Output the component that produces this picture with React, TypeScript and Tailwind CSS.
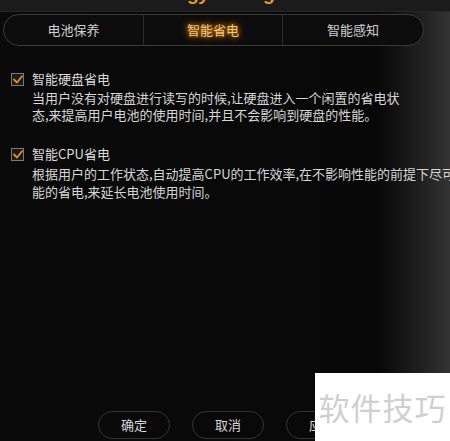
import React from "react";

function Check() {
  return (
    <div className="w-[13px] h-[13px] border border-[#7a7a7a] bg-[#1a1a1a] flex items-center justify-center shrink-0">
      <svg width="10" height="9" viewBox="0 0 10 9">
        <path d="M1 4.5 L4 7.5 L9 1.2" stroke="#e8892a" strokeWidth="1.8" fill="none" strokeLinecap="round" strokeLinejoin="round" />
      </svg>
    </div>
  );
}

export default function App() {
  const font = { fontFamily: '"Microsoft YaHei","Noto Sans CJK SC","Noto Sans",sans-serif' };
  return (
    <div
      className="relative w-[450px] h-[441px] overflow-hidden bg-[linear-gradient(to_right,#0a0a0a_0%,#080808_84%,#1e1e1e_93%,#333333_100%)] text-[#d6d6d6] text-[13px]"
      style={font}
    >
      {/* title strip */}
      <div className="h-[12px] bg-[#1b1b1b] overflow-hidden relative border-b border-[#262626]">
        <div className="absolute left-[146px] top-[-20px] text-[19px] font-bold italic text-[#e49a2c] whitespace-nowrap" style={{ fontFamily: '"Liberation Sans",sans-serif' }}>
          Energy Management
        </div>
      </div>
      {/* tab bar */}
      <div className="pt-[2px] pl-[3px]">
        <div className="w-[421px] h-[32px] rounded-full border border-[#3a3a3a] bg-[#0c0c0c] flex">
          <div className="w-[139px] flex items-center justify-center text-[#d0d0d0]">电池保养</div>
          <div className="w-[140px] flex items-center justify-center border-l border-r border-[#2c2c2c] text-[#f6c57e] [text-shadow:0_0_5px_#d9860f,0_0_9px_#b86a08]">
            智能省电
          </div>
          <div className="flex-1 flex items-center justify-center text-[#d0d0d0]">智能感知</div>
        </div>
      </div>

      {/* section 1 */}
      <div className="pl-[11px] pt-[24px]">
        <div className="flex items-center gap-[8px] h-[18px]">
          <Check />
          <span className="text-[#dcdcdc]">智能硬盘省电</span>
        </div>
        <div className="pl-[21px] pt-[1px] leading-[17px] whitespace-nowrap">
          <div>当用户没有对硬盘进行读写的时候,让硬盘进入一个闲置的省电状</div>
          <div>态,来提高用户电池的使用时间,并且不会影响到硬盘的性能。</div>
        </div>
      </div>

      {/* section 2 */}
      <div className="pl-[11px] pt-[22px]">
        <div className="flex items-center gap-[8px] h-[18px]">
          <Check />
          <span className="text-[#dcdcdc]">智能CPU省电</span>
        </div>
        <div className="pl-[21px] pt-[2px] leading-[18px] whitespace-nowrap">
          <div>根据用户的工作状态,自动提高CPU的工作效率,在不影响性能的前提下尽可</div>
          <div>能的省电,来延长电池使用时间。</div>
        </div>
      </div>

      {/* buttons */}
      <div className="absolute left-[98px] top-[411px] flex gap-[22px]">
        <div className="w-[72px] h-[28px] rounded-full border border-[#343434] flex items-center justify-center text-[#d8d8d8]">确定</div>
        <div className="w-[72px] h-[28px] rounded-full border border-[#343434] flex items-center justify-center text-[#d8d8d8]">取消</div>
        <div className="w-[72px] h-[28px] rounded-full border border-[#343434] flex items-center justify-center text-[#d8d8d8]">应用</div>
      </div>

      {/* watermark */}
      <div className="absolute left-[315px] top-[373px] w-[135px] h-[68px] bg-white flex items-center justify-center">
        <span className="text-[31px] text-[#cfcfcf] tracking-[1px] whitespace-nowrap">软件技巧</span>
      </div>
    </div>
  );
}
